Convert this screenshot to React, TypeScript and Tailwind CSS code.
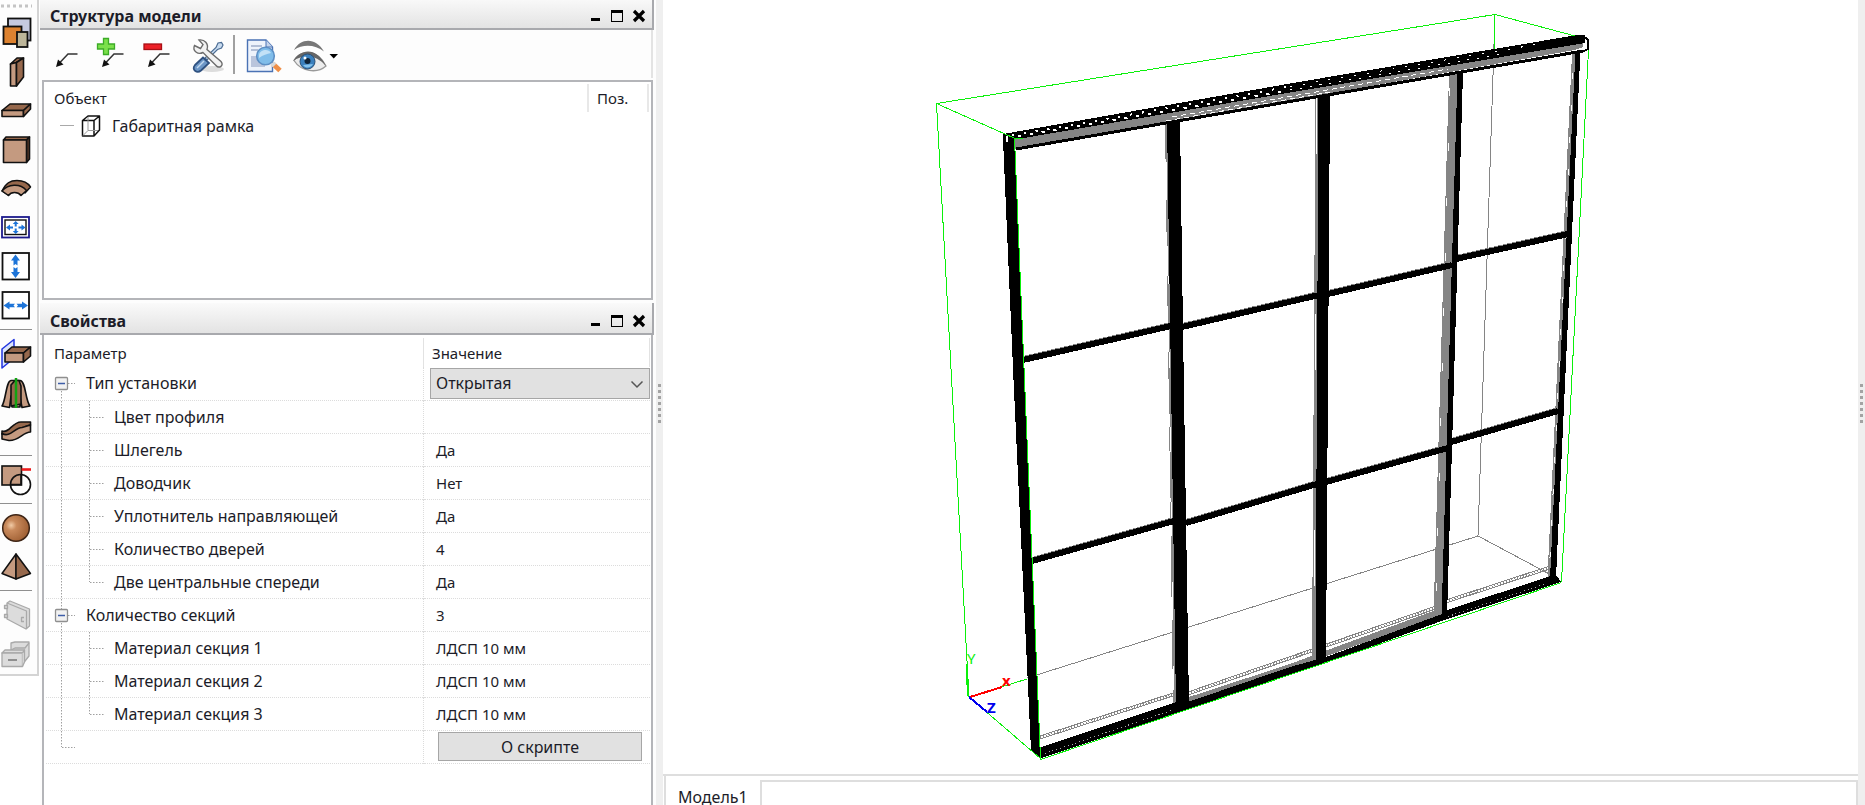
import React, { useState } from "react";

const BROWN = "#c49a80";
const BROWN_DARK = "#96684c";

type Tool = { label: string; top: number; disabled?: boolean; art: React.ReactNode };

const toolGroups: Tool[][] = [
  [
    {
      label: "Материал",
      top: 13,
      art: (
        <g stroke="#111" strokeWidth="1.8">
          <rect x="8" y="18.5" width="22.5" height="22" fill="#c6cae0" />
          <rect x="3.5" y="26.500" width="18" height="17.500" fill="#dd8230" />
          <rect x="17" y="32" width="10.500" height="15" fill="#bdb69a" />
        </g>
      ),
    },
    {
      label: "Вертикальная панель",
      top: 52,
      art: (
        <g stroke="#111" strokeWidth="1.6" strokeLinejoin="round">
          <path d="M10.500 64L17 58H23.500L16.500 62.500Z" fill={BROWN_DARK} />
          <path d="M10.500 64L16.500 62.500V86L10.500 86Z" fill={BROWN} />
          <path d="M16.500 62.500L23.500 58V77L16.500 86Z" fill={BROWN_DARK} />
        </g>
      ),
    },
    {
      label: "Горизонтальная панель",
      top: 91,
      art: (
        <g stroke="#111" strokeWidth="1.6" strokeLinejoin="round">
          <path d="M2 110.500L10 104H30.500L23.500 110.500Z" fill={BROWN_DARK} />
          <path d="M2 110.500H23.500V116.500H2Z" fill={BROWN} />
          <path d="M23.500 110.500L30.500 104V109L23.500 116.500Z" fill={BROWN_DARK} />
        </g>
      ),
    },
    {
      label: "Фронтальная панель",
      top: 130,
      art: (
        <g stroke="#111" strokeWidth="1.6" strokeLinejoin="round">
          <path d="M3.500 140L6 137H29.500L26.500 140Z" fill={BROWN_DARK} />
          <path d="M26.500 140L29.500 137V159L26.500 162.500Z" fill="#5b3a28" />
          <rect x="3.500" y="140" width="23" height="22.500" fill={BROWN} />
        </g>
      ),
    },
    {
      label: "Гнутая панель",
      top: 169,
      art: (
        <g stroke="#111" strokeWidth="1.500" strokeLinejoin="round">
          <path d="M2 191C6 183 10 180.500 17 180.500C24 180.500 28 183 30.500 187L25 193C22 187 10 187 8 195Z" fill={BROWN_DARK} />
          <path d="M2 191C8 184 20 183 26.500 190.500L21 195.500C18 191.500 11 191.500 8.500 195.500Z" fill={BROWN} />
        </g>
      ),
    },
    {
      label: "Вписать всё",
      top: 208,
      art: (
        <g>
          <rect x="2" y="217" width="27" height="20.500" fill="#fff" stroke="#1c1a8c" strokeWidth="1.800" />
          <rect x="5" y="220" width="21" height="14.500" fill="#fff" stroke="#111" strokeWidth="1.400" />
          <path
            d="M6 227.500l4-3v2h3v2h-3v2zM25.500 227.500l-4-3v2h-3v2h3v2zM15.700 221l3 3h-2v2.500h-2v-2.500h-2zM15.700 234l3-3h-2v-2.500h-2v2.500h-2z"
            fill="#1d74d8"
          />
        </g>
      ),
    },
    {
      label: "По высоте",
      top: 247,
      art: (
        <g>
          <rect x="2.500" y="253" width="26.500" height="26.500" fill="#fff" stroke="#111" strokeWidth="1.800" />
          <path d="M15.500 254.500l4.500 6h-2.500v5l-2-1.500-2 1.500v-5h-2.500zM15.500 278l4.500-6h-2.500v-5l-2 1.500-2-1.500v5h-2.500z" fill="#1d74d8" />
        </g>
      ),
    },
    {
      label: "По ширине",
      top: 286,
      art: (
        <g>
          <rect x="2.500" y="292" width="26.500" height="26.500" fill="#fff" stroke="#111" strokeWidth="1.800" />
          <path d="M3.500 305.500l6-4v2.200h5.500l-1.500 1.800 1.500 1.800h-5.500v2.200zM28 305.500l-6-4v2.200h-5.500l1.500 1.800-1.500 1.800h5.500v2.200z" fill="#1d74d8" />
        </g>
      ),
    },
  ],
  [
    {
      label: "Панель по плоскости",
      top: 334,
      art: (
        <g stroke="#111" strokeWidth="1.600" strokeLinejoin="round">
          <path d="M2 349L14 339.500V358L2 368Z" fill="#dce4fa" stroke="#2135e0" strokeWidth="1.500" />
          <path d="M5 353L12 347H30.500L23.500 353Z" fill={BROWN_DARK} />
          <path d="M5 353H23.500V362H5Z" fill={BROWN} />
          <path d="M23.500 353L30.500 347V356L23.500 362Z" fill={BROWN_DARK} />
        </g>
      ),
    },
    {
      label: "Тело вращения",
      top: 373,
      art: (
        <g stroke="#111" strokeWidth="1.600" strokeLinejoin="round">
          <path d="M2 406C6 400 6 381 11 380.500H20C26 381 25 400 30 406L22 407.500L20 397V407H12L11 396L9.500 407.500Z" fill={BROWN} />
          <path d="M11 406V385L15 380.500H19L21 386V404Z" fill={BROWN_DARK} />
          <path d="M16 378V408" stroke="#12a312" strokeWidth="2.500" />
        </g>
      ),
    },
    {
      label: "Тело по траектории",
      top: 412,
      art: (
        <g stroke="#111" strokeWidth="1.600" strokeLinejoin="round">
          <path d="M2 431C9 434 12 422 21 422H30.500V425C22 425 17 437 9 436.500L2 434Z" fill={BROWN_DARK} />
          <path d="M2 433.500C10 438 14 428 22 427.500L30.500 425V432C23 432 19 441 9 440.500L2 439Z" fill={BROWN} />
        </g>
      ),
    },
  ],
  [
    {
      label: "Контур",
      top: 460,
      art: (
        <g>
          <rect x="2" y="466" width="19.500" height="19" fill={BROWN} stroke="#111" strokeWidth="1.600" />
          <path d="M21.500 469.500H31" stroke="#ee1c1c" strokeWidth="2.600" />
          <circle cx="20.500" cy="484.500" r="10" fill="none" stroke="#111" strokeWidth="1.600" />
          <path d="M21 475V484.500H10.500" fill="none" stroke="#111" strokeWidth="1.600" />
        </g>
      ),
    },
  ],
  [
    {
      label: "Сфера",
      top: 508,
      art: (
        <g>
          <defs>
            <radialGradient id="sphere" cx="0.32" cy="0.4" r="0.65">
              <stop offset="0" stopColor="#f1cba6" />
              <stop offset="0.3" stopColor="#c98a5c" />
              <stop offset="1" stopColor="#a26236" />
            </radialGradient>
          </defs>
          <circle cx="16" cy="528" r="13.300" fill="url(#sphere)" stroke="#3d2415" strokeWidth="1.500" />
        </g>
      ),
    },
    {
      label: "Пирамида",
      top: 547,
      art: (
        <g stroke="#111" strokeWidth="1.500" strokeLinejoin="round">
          <path d="M16 554L2 573.500L16 579Z" fill={BROWN} />
          <path d="M16 554L30.500 573.500L16 579Z" fill={BROWN_DARK} />
        </g>
      ),
    },
  ],
  [
    {
      label: "Дверь",
      top: 595,
      disabled: true,
      art: (
        <g stroke="#a9a9a9" strokeWidth="1.300" strokeLinejoin="round" fill="#dcdcdc">
          <path d="M7 603L10 601L29.500 609V626L26 629L7 619Z" />
          <path d="M7 603L26.500 611V629" fill="none" />
          <path d="M4.500 605.500h3v3h-3zM4.500 614.500h3v3h-3z" />
          <path d="M24 617.500h-2.500v4H24" fill="none" />
        </g>
      ),
    },
    {
      label: "Ящик",
      top: 634,
      disabled: true,
      art: (
        <g stroke="#a9a9a9" strokeWidth="1.300" strokeLinejoin="round" fill="#dcdcdc">
          <path d="M11 650V643L15 642H29V656L23.500 663Z" />
          <path d="M11 650L15 648H25L29 643" fill="none" />
          <path d="M2 653L5 650H24.500L22.500 653Z" />
          <rect x="2" y="653" width="20.500" height="13.500" />
          <path d="M22.500 653L24.500 650V662L22.500 666.500" />
          <path d="M8 660H17" stroke="#8f8f8f" strokeWidth="2" />
        </g>
      ),
    },
  ],
];

function ToolPalette() {
  return (
    <nav aria-label="Инструменты" className="w-[39px] shrink-0 self-start border-r-2 border-b-2 border-[#d4d4d4] bg-[#fdfdfd] pb-px">
      <svg className="block h-[13px] w-8" viewBox="0 0 32 13" aria-hidden="true">
        <path d="M1 6H32" stroke="#c4c4c4" strokeWidth="3" strokeDasharray="3 3" />
      </svg>
      {toolGroups.map((group, i) => (
        <div key={i}>
          {i > 0 && (
            <div className="flex h-[9px] items-center">
              <div className="h-px w-8 bg-[#8f8f8f]" />
            </div>
          )}
          {group.map((tool) => (
            <button key={tool.label} type="button" aria-label={tool.label} disabled={tool.disabled} className="block h-[39px] w-[34px]">
              <svg className="block h-full w-full" viewBox={`0 ${tool.top} 34 39`}>
                {tool.art}
              </svg>
            </button>
          ))}
        </div>
      ))}
    </nav>
  );
}

function PanelHeader({ title }: { title: string }) {
  return (
    <header className="mr-0.5 flex h-8 shrink-0 items-center border-r-2 border-b-2 border-[#a8a9ad] bg-linear-to-b from-[#fafafa] to-[#e3e3e3] pt-1.5 pr-0.5 pl-2.5">
      <h2 className="grow text-base leading-5 font-bold">{title}</h2>
      <button type="button" aria-label="Свернуть" className="size-[22px]">
        <svg className="block" viewBox="0 0 22 22">
          <path d="M7 14.500H16" stroke="#000" strokeWidth="3" />
        </svg>
      </button>
      <button type="button" aria-label="Развернуть" className="size-[22px]">
        <svg className="block" viewBox="0 0 22 22" shapeRendering="crispEdges">
          <path d="M5 5H17V17H5ZM6 8V16H16V8Z" fill="#000" fillRule="evenodd" />
        </svg>
      </button>
      <button type="button" aria-label="Закрыть" className="size-[22px]">
        <svg className="block" viewBox="0 0 22 22">
          <path d="M6 6L16 16M16 6L6 16" stroke="#000" strokeWidth="3.200" />
        </svg>
      </button>
    </header>
  );
}

function LeaderArrow({ x }: { x: number }) {
  return (
    <g>
      <path d={`M${x + 21.500} 54H${x + 12}L${x + 3} 63.500`} fill="none" stroke="#333" strokeWidth="1.500" />
      <path d={`M${x} 67L${x + 2} 59.500L${x + 7.500} 64.500Z`} fill="#111" />
    </g>
  );
}

function ModelToolbar() {
  return (
    <div className="mr-[3px] ml-1 flex h-12 shrink-0 items-center border-r-2 border-[#e3e3e3]">
      <button type="button" aria-label="Выноска" className="h-full w-[46px]">
        <svg className="block h-full w-full" viewBox="44 30 46 48">
          <LeaderArrow x={56} />
        </svg>
      </button>
      <button type="button" aria-label="Добавить выноску" className="h-full w-[46px]">
        <svg className="block h-full w-full" viewBox="90 30 46 48">
          <LeaderArrow x={102} />
          <path d="M103.500 38.500h5v5.500h6v5h-6v5.500h-5v-5.500h-6v-5h6z" fill="#7be04a" stroke="#3cab27" strokeWidth="1.300" />
        </svg>
      </button>
      <button type="button" aria-label="Удалить выноску" className="h-full w-[46px]">
        <svg className="block h-full w-full" viewBox="136 30 46 48">
          <LeaderArrow x={148} />
          <rect x="144" y="44" width="17.500" height="5.500" fill="#ec2027" stroke="#a80f14" strokeWidth="1.300" />
        </svg>
      </button>
      <button type="button" aria-label="Настройки" className="h-full w-[51px]">
        <svg className="block h-full w-full" viewBox="182 30 51 48">
          <ellipse cx="212" cy="69" rx="12" ry="3" fill="#ddd" />
          <path d="M216 47.500L218 43L221.500 42.500L223 45L221.500 48L217.500 49.500L207 60L205 58Z" fill="#c9dcf0" stroke="#4c6d94" strokeWidth="1.200" />
          <path d="M195 65L203 57.500L209 63L201 70.500C197 74 191 69.500 195 65Z" fill="#6d97c7" stroke="#2f5180" strokeWidth="1.800" />
          <path d="M197 68L204 61" stroke="#c1d8ef" strokeWidth="1.500" />
          <path
            d="M199 40L203 44.500L200.500 48.500L194.500 45.500C192 51 198 55 203 52.500L216 65.500C219 69 224.500 65.500 221 61.500L207 49.500C209 44 204.500 39 199 40Z"
            fill="#f2f2f2"
            stroke="#6c6c6c"
            strokeWidth="1.400"
          />
        </svg>
      </button>
      <div className="h-[39px] w-0.5 bg-[#a0a0a0]" />
      <button type="button" aria-label="Просмотр" className="h-full w-[51px]">
        <svg className="block h-full w-full" viewBox="235 30 51 48">
          <path d="M247.500 40H266L272.500 47V71.500H247.500Z" fill="#eef3fb" stroke="#4a72b4" strokeWidth="1.400" />
          <path d="M266 40V47H272.500" fill="#c5d5ec" stroke="#4a72b4" />
          <path d="M251 46H262M251 50H258" stroke="#b3bfd6" strokeWidth="2" />
          <rect x="251" y="56" width="14" height="11" fill="#bac5dc" />
          <path d="M273 64L280 70.500" stroke="#ef8f48" strokeWidth="5" />
          <path d="M272 63L274.500 65.500" stroke="#d9d9d9" strokeWidth="5" />
          <circle cx="265.500" cy="56" r="8.800" fill="#80bdea" stroke="#5d8fc4" strokeWidth="1.600" />
          <path d="M259 55C260 50 268 48 271 53C267 54 263 55 259 58Z" fill="#c2e1f7" />
        </svg>
      </button>
      <button type="button" aria-label="Видимость" aria-haspopup="menu" className="h-full w-[56px]">
        <svg className="block h-full w-full" viewBox="286 30 56 48">
          <path d="M294 50C301 37.500 316 37.500 324 51.500C315 44.500 303 44 294 50Z" fill="#777" />
          <path d="M294 60.500C301 49.500 317 49 326 66C317 74 301 71.500 294 60.500Z" fill="#ececec" stroke="#999" strokeWidth="1.300" />
          <path d="M293 61C301 48 317 47 326 66C317 55 303 54 293 61Z" fill="#666" />
          <circle cx="307.500" cy="61.500" r="7.500" fill="#3b80bd" stroke="#2b4f74" />
          <path d="M303 65C306 69 311 68 313 64Z" fill="#86c4ee" />
          <circle cx="307.500" cy="61" r="3" fill="#0f2236" />
          <circle cx="305" cy="58" r="1.500" fill="#fff" />
          <path d="M329.500 54H338L333.700 58.500Z" fill="#000" />
        </svg>
      </button>
    </div>
  );
}

function ModelTree() {
  return (
    <div className="mr-[3px] ml-0.5 h-[220px] shrink-0 border-2 border-[#b4b5b9] bg-white p-0.5">
      <table className="w-full table-fixed border-collapse">
        <colgroup>
          <col />
          <col className="w-[60px]" />
        </colgroup>
        <thead>
          <tr className="h-7">
            <th className="pl-2 text-left font-normal">Объект</th>
            <th className="border-x-2 border-[#e8e8e8] pl-2 text-left font-normal">Поз.</th>
          </tr>
        </thead>
        <tbody>
          <tr className="h-7">
            <td>
              <div className="flex h-7 items-center text-base leading-5">
                <svg className="h-7 w-[66px] shrink-0" viewBox="46 112 66 28" aria-hidden="true">
                  <path d="M60 125.500H74" stroke="#a9a9a9" />
                  <g fill="none" stroke="#111" strokeWidth="1.500" strokeLinejoin="round">
                    <path d="M82.500 120.500H94V136H82.500ZM82.500 120.500L88 116H99.500L94 120.500M99.500 116V130L94 136" />
                    <path d="M88 117V130.500H98M88 130.500L83 135.500" stroke="#999" strokeWidth="1" />
                  </g>
                </svg>
                Габаритная рамка
              </div>
            </td>
            <td />
          </tr>
        </tbody>
      </table>
    </div>
  );
}

type Guide = "root" | "rootMid" | "child" | "lastOfFirst" | "end";
type Row = { name: string; value?: string; guide: Guide; kind?: "select" | "button" };

const rows: Row[] = [
  { name: "Тип установки", guide: "root", kind: "select", value: "Открытая" },
  { name: "Цвет профиля", guide: "child" },
  { name: "Шлегель", value: "Да", guide: "child" },
  { name: "Доводчик", value: "Нет", guide: "child" },
  { name: "Уплотнитель направляющей", value: "Да", guide: "child" },
  { name: "Количество дверей", value: "4", guide: "child" },
  { name: "Две центральные спереди", value: "Да", guide: "lastOfFirst" },
  { name: "Количество секций", value: "3", guide: "rootMid" },
  { name: "Материал секция 1", value: "ЛДСП 10 мм", guide: "child" },
  { name: "Материал секция 2", value: "ЛДСП 10 мм", guide: "child" },
  { name: "Материал секция 3", value: "ЛДСП 10 мм", guide: "lastOfFirst" },
  { name: "", value: "О скрипте", guide: "end", kind: "button" },
];

const guidePaths: Record<Guide, string> = {
  root: "M15.500 24V33M22 16.500H29",
  rootMid: "M15.500 0V10M15.500 24V33M22 16.500H29",
  child: "M15.500 0V33M43.500 0V33M44 16.500H59",
  lastOfFirst: "M15.500 0V33M43.500 0V16M44 16.500H59",
  end: "M15.500 0V16M16 16.500H29",
};

function TreeGuide({ guide }: { guide: Guide }) {
  const root = guide === "root" || guide === "rootMid";
  return (
    <svg className={root ? "h-8 w-10 shrink-0" : "h-8 w-[68px] shrink-0"} viewBox={root ? "0 0 40 32" : "0 0 68 32"} aria-hidden="true">
      <path d={guidePaths[guide]} stroke="#a0a0a0" strokeDasharray="1.500 1.500" />
      {root && (
        <g>
          <rect x="9.500" y="10.500" width="12" height="12" rx="1" fill="#f1f1f1" stroke="#8f8f8f" strokeWidth="1.300" />
          <path d="M12 16.500H19" stroke="#3e5ea8" strokeWidth="1.500" />
        </g>
      )}
    </svg>
  );
}

function Properties() {
  const [mount, setMount] = useState("Открытая");
  return (
    <div className="mr-[3px] ml-0.5 grow border-x-2 border-[#b4b5b9] bg-white pt-[3px] pr-px pl-0.5">
      <table className="w-full table-fixed border-collapse">
        <colgroup>
          <col />
          <col className="w-[226px]" />
        </colgroup>
        <thead>
          <tr className="h-[29px]">
            <th className="pl-2 text-left font-normal">Параметр</th>
            <th className="border-x border-[#e2e2e2] pl-2 text-left font-normal">Значение</th>
          </tr>
        </thead>
        <tbody>
          {rows.map((row, i) => (
            <tr key={i} className="h-[33px] border-b border-dotted border-[#dcdcdc]">
              <td className="p-0">
                <div className="flex h-8 items-center text-base leading-5">
                  <TreeGuide guide={row.guide} />
                  {row.kind === "select" ? <label htmlFor="mount">{row.name}</label> : row.name}
                </div>
              </td>
              <td className="border-l border-dotted border-[#dcdcdc] p-0">
                {row.kind === "select" && (
                  <div className="relative ml-1.5 h-[31px]">
                    <select
                      id="mount"
                      value={mount}
                      onChange={(e) => setMount(e.target.value)}
                      className="h-full w-full appearance-none border border-[#a6a6a6] bg-[#e1e1e1] pl-[5px] text-base leading-5"
                    >
                      <option>Открытая</option>
                      <option>Закрытая</option>
                    </select>
                    <svg className="pointer-events-none absolute top-2.5 right-1.5 size-3.5" viewBox="0 0 14 14" aria-hidden="true">
                      <path d="M1.500 3.500L7 9L12.500 3.500" fill="none" stroke="#555" strokeWidth="1.500" />
                    </svg>
                  </div>
                )}
                {row.kind === "button" && (
                  <button type="button" className="mr-2 ml-3.5 block h-[29px] w-[204px] border border-[#a6a6a6] bg-[#e1e1e1] text-base leading-5">
                    {row.value}
                  </button>
                )}
                {!row.kind && <span className="pl-3">{row.value}</span>}
              </td>
            </tr>
          ))}
        </tbody>
      </table>
    </div>
  );
}

function Splitter() {
  return (
    <div className="flex w-[7px] shrink-0 justify-center bg-[#efefef]">
      <svg className="mt-[384px] h-10 w-[3px]" viewBox="0 0 3 40" shapeRendering="crispEdges" aria-hidden="true">
        <path d="M1.500 0V40" stroke="#a3a3a3" strokeWidth="3" strokeDasharray="3 3" />
      </svg>
    </div>
  );
}

const blackRails = [
  "M1023 360L1171 326",
  "M1182 327L1319 295",
  "M1328 294L1452 265",
  "M1456 259L1568 234",
  "M1032 561L1174 521",
  "M1186 523L1317 484",
  "M1326 482L1448 448",
  "M1451 442L1558 411",
];

function Cabinet() {
  return (
    <svg className="block h-full w-full" viewBox="663 0 1195 774" role="img" aria-label="Габаритная рамка" shapeRendering="crispEdges">
      <g fill="none" stroke="#858585">
        <path d="M1495 14L1478 536L1555 577M1478 536L1027 678" />
        <path d="M1040 736L1176 692M1188 692L1436 606M1446 600L1550 566" />
        <path d="M1040 739L1176 695M1188 695L1436 609M1446 603L1550 569" />
        <path d="M1040 737.500L1176 693.500M1188 693.500L1436 607.500M1446 601.500L1550 567.500" strokeWidth="3" strokeDasharray="1 2" />
      </g>
      <path d="M1186 699L1290 665L1436 611L1442 614L1290 668L1186 704Z" fill="#858585" stroke="#858585" strokeWidth="2" />

      <g fill="#858585">
        <path d="M1165 122H1168L1176 705H1173Z" />
        <path d="M1315.500 98H1319L1316 660H1312Z" />
        <path d="M1449 74H1458L1442 617H1433.500Z" />
        <path d="M1572 53H1576L1551 577H1547.500Z" />
      </g>
      <g fill="none" stroke="#fff">
        <path d="M1166.500 162L1173.500 690" strokeDasharray="38 46" />
        <path d="M1317 98L1314 656" strokeDasharray="56 160" />
        <path d="M1450 88L1436 600" strokeDasharray="8 47" />
        <path d="M1573 73L1549.500 568" strokeDasharray="6 26" />
      </g>
      <g fill="none" stroke="#858585" strokeWidth="2">
        {blackRails.map((d) => (
          <path key={d} d={d} transform="translate(0 -3)" />
        ))}
      </g>
      <g fill="none" stroke="#000" strokeWidth="6">
        {blackRails.map((d) => (
          <path key={d} d={d} />
        ))}
      </g>
      <g fill="#000">
        <path d="M1167 120H1180L1183 330L1189 706H1176Z" />
        <path d="M1318.500 96H1330L1326 663H1315.500Z" />
        <path d="M1457.500 74L1463 72L1447 617H1441.500Z" />
        <path d="M1575.500 52L1580.500 50L1556 578H1550Z" />
        <path d="M1003 139H1014L1024 380L1040 757L1031 750L1013.500 380Z" />
        <path d="M1031 748L1041 747L1176 702L1188 702L1290 667L1326 657L1442 614L1447 610L1551 576L1557 576L1561 582L1447 619L1326 663L1188 709L1041 758Z" />
      </g>
      <g fill="none" stroke="#aaa" strokeDasharray="1 3">
        <path d="M1045 753.500L1174 709.500M1448 616.500L1545 584" />
      </g>

      <path d="M1014 139L1575 44L1583 43V47L1575 50L1014 149Z" fill="#858585" />
      <path d="M1003 134L1290 83.500L1577 35H1585V43L1290 92.500L1018 139L1003 141Z" fill="#000" />
      <path d="M1016 149L1290 101.500L1583 51" fill="none" stroke="#000" strokeWidth="3" />
      <path d="M1012 135.500L1290 86.500" fill="none" stroke="#fff" strokeWidth="2" strokeDasharray="2 10" />
      <path d="M1018 136.500L1290 90.500" fill="none" stroke="#fff" strokeWidth="2" strokeDasharray="3 9" />
      <path d="M1290 86.500L1545 43" fill="none" stroke="#fff" strokeDasharray="2 11" />
      <path d="M1290 90L1500 54.500" fill="none" stroke="#fff" strokeDasharray="2 8" />
      <path d="M1172 117L1448 69M1166 121L1330 92" fill="none" stroke="#fff" strokeDasharray="5 4" />
      <path d="M1004 134V143M1010 136V143" stroke="#000" strokeWidth="3" />
      <path d="M1006.500 136V142" stroke="#fff" strokeWidth="2" />
      <path d="M1574 36H1583L1588 39.500V49L1582 52" fill="none" stroke="#000" strokeWidth="2" />

      <g fill="none" stroke="#0bf00b">
        <path d="M969 697L936.500 103.500L1495 14.500L1575 36" />
        <path d="M936.500 103.500L1014 138H1023" />
        <path d="M1494.500 14V49" />
        <path d="M1014.500 139L1024.500 380L1040.500 758.500L969 697" />
        <path d="M1588.500 50L1561.500 582.500L1040.500 759.500" />
        <path d="M1001 687L1027 679" />
        <path d="M968 696L966.500 664" strokeWidth="2" />
      </g>
      <path d="M970 697L1002 687" stroke="#f00" strokeWidth="2" />
      <path d="M969 697L987 712" stroke="#00e" strokeWidth="2" />
      <g className="font-['Noto_Sans',sans-serif] text-[15px] font-bold">
        <text x="967" y="664" fill="#0bf00b" fontWeight="400">Y</text>
        <text x="1002" y="686" fill="#f00">x</text>
        <text x="987" y="713" fill="#00e">Z</text>
      </g>
    </svg>
  );
}

export default function App() {
  return (
    <div className="flex h-screen overflow-hidden bg-white font-['Noto_Sans',sans-serif] text-[15px] leading-5 text-[#1c1c28]">
      <ToolPalette />
      <aside className="ml-px flex w-[616px] shrink-0 flex-col bg-[#fdfdfd]">
        <div className="-mt-0.5">
          <PanelHeader title="Структура модели" />
        </div>
        <ModelToolbar />
        <div className="pt-0.5">
          <ModelTree />
        </div>
        <div className="flex grow flex-col pt-[3px]">
          <PanelHeader title="Свойства" />
          <Properties />
        </div>
      </aside>
      <Splitter />
      <main className="flex min-w-0 grow flex-col">
        <div className="min-h-0 grow">
          <Cabinet />
        </div>
        <div className="flex h-[31px] shrink-0 border-t-2 border-[#dedede]">
          <a href="#model1" className="ml-px flex w-24 items-start border-l-2 border-[#dedede] pt-[11px] pl-3 text-base leading-5">
            Модель1
          </a>
          <div className="mt-1 grow border-2 border-b-0 border-[#dedede]" />
        </div>
      </main>
      <Splitter />
    </div>
  );
}
